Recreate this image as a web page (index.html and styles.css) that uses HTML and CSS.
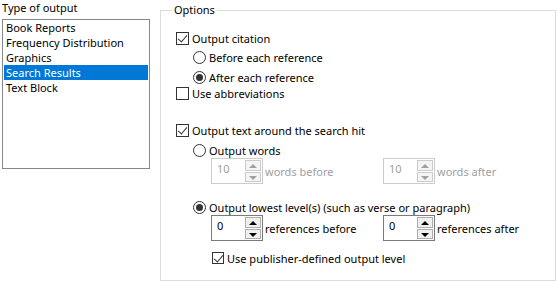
FILE: index.html
```html
<!DOCTYPE html>
<html lang="en">
<head>
    <meta charset="UTF-8">
    <title>Output Options</title>
    <link rel="stylesheet" href="styles.css">
</head>
<body>
    <div class="type-column">
        <div class="type-title">Type of output</div>
        <ul class="listbox">
            <li>Book Reports</li>
            <li>Frequency Distribution</li>
            <li>Graphics</li>
            <li class="selected">Search Results</li>
            <li>Text Block</li>
        </ul>
    </div>

    <fieldset class="options">
        <legend>Options</legend>

        <div class="row row-citation">
            <span class="check checked"></span>Output citation
        </div>
        <div class="row sub row-before">
            <span class="radio"></span>Before each reference
        </div>
        <div class="row sub row-after">
            <span class="radio on"></span>After each reference
        </div>
        <div class="row row-abbrev">
            <span class="check"></span>Use abbreviations
        </div>

        <div class="row row-around">
            <span class="check checked"></span>Output text around the search hit
        </div>
        <div class="row sub row-words">
            <span class="radio"></span>Output words
        </div>
        <div class="spin-row disabled">
            <div class="pair">
                <div class="spinner"><span class="value">10</span><span class="arrows"><span class="up"></span><span class="down"></span></span></div>
                <span class="spin-label">words before</span>
            </div>
            <div class="pair">
                <div class="spinner"><span class="value">10</span><span class="arrows"><span class="up"></span><span class="down"></span></span></div>
                <span class="spin-label">words after</span>
            </div>
        </div>

        <div class="row sub row-lowest">
            <span class="radio on"></span>Output lowest level(s) (such as verse or paragraph)
        </div>
        <div class="spin-row refs">
            <div class="pair">
                <div class="spinner"><span class="value">0</span><span class="arrows"><span class="up"></span><span class="down"></span></span></div>
                <span class="spin-label">references before</span>
            </div>
            <div class="pair">
                <div class="spinner"><span class="value">0</span><span class="arrows"><span class="up"></span><span class="down"></span></span></div>
                <span class="spin-label">references after</span>
            </div>
        </div>
        <div class="row publisher">
            <span class="check checked"></span>Use publisher-defined output level
        </div>
    </fieldset>
</body>
</html>
```

FILE: styles.css
```css
body {
    margin: 0;
    width: 558px;
    height: 282px;
    background: #ffffff;
    font-family: "Noto Sans", "Open Sans", sans-serif;
    font-size: 11px;
    color: #000000;
    display: flex;
    align-items: flex-start;
    overflow: hidden;
}

.type-column {
    width: 150px;
    margin-left: 1px;
}

.type-title {
    line-height: 16px;
    padding-left: 1px;
}

.listbox {
    list-style: none;
    margin: 3px 0 0 1px;
    padding: 0 1px;
    width: 148px;
    height: 150px;
    box-sizing: border-box;
    border: 1px solid #828790;
}

.listbox li {
    height: 15px;
    line-height: 15px;
    padding-left: 2px;
    white-space: nowrap;
}

.listbox li.selected {
    background: #0078d7;
    color: #ffffff;
}

.options {
    margin: 2px 0 0 9px;
    padding: 0 0 14px 15px;
    width: 396px;
    box-sizing: border-box;
    border: 1px solid #dcdcdc;
    min-width: 0;
}

.options legend {
    padding: 0 2px;
    margin-left: -4px;
    line-height: 16px;
}

.row {
    display: flex;
    align-items: center;
    height: 16px;
    white-space: nowrap;
}

.row.sub {
    padding-left: 17px;
}

.row-citation { margin-top: 12px; }
.row-before { margin-top: 3px; }
.row-after { margin-top: 4px; }
.row-around { margin-top: 21px; }
.row-words { margin-top: 4px; }
.row-lowest { margin-top: 16px; height: 15px; }
.publisher { margin-top: 9px; padding-left: 36px; }

.check {
    width: 13px;
    height: 13px;
    box-sizing: border-box;
    border: 1px solid #333333;
    margin-right: 3px;
    flex-shrink: 0;
    position: relative;
}

.check.checked::after {
    content: "";
    position: absolute;
    left: 3px;
    top: 0px;
    width: 4px;
    height: 8px;
    border-right: 1px solid #333333;
    border-bottom: 1px solid #333333;
    transform: rotate(40deg);
}

.publisher .check {
    width: 12px;
    height: 12px;
}

.radio {
    width: 13px;
    height: 13px;
    box-sizing: border-box;
    border: 1px solid #333333;
    border-radius: 50%;
    margin-right: 3px;
    flex-shrink: 0;
    display: flex;
    align-items: center;
    justify-content: center;
}

.radio.on::after {
    content: "";
    width: 7px;
    height: 7px;
    border-radius: 50%;
    background: #333333;
}

.spin-row {
    display: flex;
    padding-left: 35px;
    height: 26px;
}

.pair {
    display: flex;
    align-items: center;
    width: 176px;
}

.spinner {
    width: 52px;
    height: 26px;
    box-sizing: border-box;
    border: 1px solid #7a7a7a;
    display: flex;
    justify-content: space-between;
    margin-right: 2px;
}

.spinner .value {
    padding: 2px 0 0 5px;
    line-height: 16px;
}

.arrows {
    display: flex;
    flex-direction: column;
    width: 16px;
    padding: 1px;
    gap: 1px;
}

.arrows span {
    flex: 1;
    border: 1px solid #adadad;
    background: #f0f0f0;
    position: relative;
}

.arrows .up::after,
.arrows .down::after {
    content: "";
    position: absolute;
    left: 3px;
    top: 3px;
    border-left: 4px solid transparent;
    border-right: 4px solid transparent;
}

.arrows .up::after {
    border-bottom: 4px solid #000000;
}

.arrows .down::after {
    border-top: 4px solid #000000;
}

.disabled .spinner {
    border-color: #cccccc;
}

.disabled .value,
.disabled .spin-label {
    color: #a0a0a0;
}

.disabled .arrows span {
    border-color: #cccccc;
    background: #f4f4f4;
}

.disabled .arrows .up::after {
    border-bottom-color: #a0a0a0;
}

.disabled .arrows .down::after {
    border-top-color: #a0a0a0;
}

.refs {
    margin-top: 0;
}
```
